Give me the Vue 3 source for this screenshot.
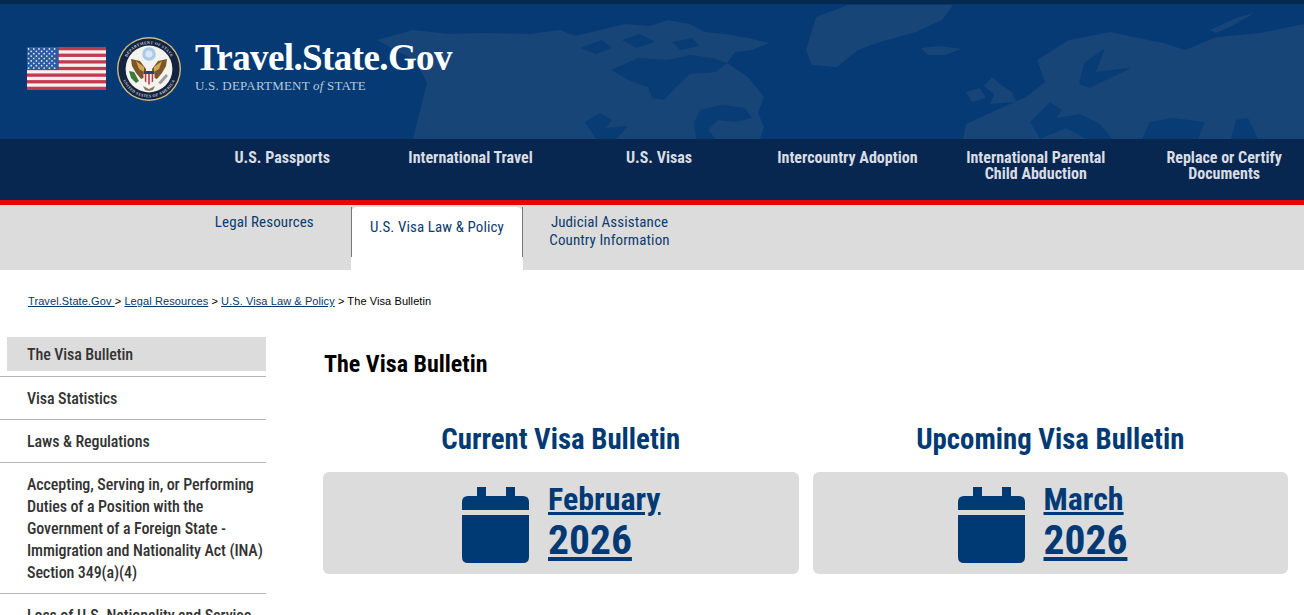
<script setup>
const navItems = [
  ['U.S. Passports'],
  ['International Travel'],
  ['U.S. Visas'],
  ['Intercountry Adoption'],
  ['International Parental', 'Child Abduction'],
  ['Replace or Certify', 'Documents'],
];

const sideItems = [
  { label: 'The Visa Bulletin', active: true },
  { label: 'Visa Statistics' },
  { label: 'Laws & Regulations' },
  {
    label:
      'Accepting, Serving in, or Performing Duties of a Position with the Government of a Foreign State - Immigration and Nationality Act (INA) Section 349(a)(4)',
  },
  { label: 'Loss of U.S. Nationality and Service in a Foreign Military' },
];

const bulletins = [
  { title: 'Current Visa Bulletin', month: 'February', year: '2026' },
  { title: 'Upcoming Visa Bulletin', month: 'March', year: '2026' },
];

const stripes = [0, 1, 2, 3, 4, 5, 6];
const stars = [];
for (let row = 0; row < 9; row++) {
  const count = row % 2 ? 5 : 6;
  for (let i = 0; i < count; i++) {
    stars.push({ x: (row % 2 ? 4.2 : 1.6) + i * 5.2, y: 1.9 + row * 2.4 });
  }
}
</script>

<template>
  <div class="page">
    <header class="banner">
      <!-- world map behind the header, coords are page px -->
      <svg class="map" viewBox="0 4 1304 135" preserveAspectRatio="none" aria-hidden="true">
        <path
          class="land"
          d="M377 40 L413 30 L450 34 L480 33 L530 34 L560 30 L575 36 L600 30 L625 24 L650 26 L668 20 L690 24 L705 32 L725 34 L748 38 L769 43 L752 50 L735 52 L727 63 L748 77 L764 97 L758 113 L764 127 L760 139 L413 139 L427 83 L415 60 L395 50 Z"
        />
        <path class="sea" d="M611 70 L638 58 L668 60 L690 55 L712 58 L727 63 L716 72 L690 74 L675 88 L664 100 L652 98 L648 87 L628 80 Z" />
        <path class="sea" d="M585 122 L600 113 L612 120 L606 128 L628 126 L616 139 L596 139 L590 130 Z" />
        <path class="sea" d="M700 110 L722 105 L745 108 L752 118 L736 122 L718 120 L708 130 L716 139 L696 139 L694 122 Z" />
        <path class="sea" d="M580 48 L602 40 L612 48 L596 54 Z M622 40 L640 34 L655 42 L636 48 Z M672 42 L692 38 L700 46 L680 50 Z" />
        <path class="land" d="M806 50 L816 17 L848 5 L953 5 L942 20 L916 32 L880 42 L858 50 L837 67 L812 65 Z" />
        <path class="land" d="M921 48 L940 46 L961 49 L945 55 L928 55 Z" />
        <path
          class="land"
          d="M1037 60 L1069 40 L1110 32 L1163 43 L1185 50 L1216 37 L1260 33 L1304 24 L1304 139 L963 139 L966 124 L990 113 L1026 97 L1045 82 Z"
        />
        <path class="sea" d="M1105 48 L1084 63 L1079 84 L1090 88 L1102 82 L1131 68 L1112 70 L1096 72 Z" />
        <path class="sea" d="M1050 102 L1062 110 L1056 118 L1080 114 L1100 124 L1112 139 L1086 139 L1066 128 L1040 139 L1030 122 Z" />
        <path class="sea" d="M1142 139 L1150 122 L1172 118 L1205 122 L1198 139 Z" />
        <path class="sea" d="M1231 139 L1236 120 L1248 118 L1258 139 Z" />
        <path class="land" d="M984 86 L992 77 L1000 84 L1012 92 L1016 102 L990 104 L994 94 Z" />
        <path class="land" d="M966 92 L980 88 L986 98 L972 102 Z" />
        <path class="land" d="M1210 30 L1236 18 L1254 13 L1232 26 L1216 33 Z" />
      </svg>

      <svg class="flag" viewBox="0 0 79 43" aria-label="United States flag" role="img">
        <rect width="79" height="43" fill="#f4f1f1" />
        <rect v-for="s in stripes" :key="s" width="79" height="3.3" :y="s * 6.62" fill="#c23a4e" />
        <rect width="31.7" height="23" fill="#2b5b9c" />
        <circle v-for="(star, i) in stars" :key="i" :cx="star.x" :cy="star.y" r="0.85" fill="#e8eef7" />
      </svg>

      <svg class="seal" viewBox="-32 -32 64 64" aria-label="Department of State seal" role="img">
        <defs>
          <path id="sealTop" d="M-25 0 A25 25 0 0 1 25 0" />
          <path id="sealBottom" d="M-28.4 0 A28.4 28.4 0 0 0 28.4 0" />
        </defs>
        <circle r="32" fill="#cdbb84" />
        <circle r="30.6" fill="#14233f" />
        <circle r="23.4" fill="#f3f3f0" />
        <text class="seal-text"><textPath href="#sealTop" startOffset="50%" text-anchor="middle">DEPARTMENT OF STATE</textPath></text>
        <text class="seal-text"><textPath href="#sealBottom" startOffset="50%" text-anchor="middle">UNITED STATES OF AMERICA</textPath></text>
        <circle cy="-15" r="6.8" fill="#a9cbe6" />
        <circle cy="-15" r="3.6" fill="#dbe8f3" />
        <path d="M-18 -10 L-9 -8 L-3 0 L-3 8 L-8 10 L-13 4 L-17 -3 Z" fill="#7d5526" />
        <path d="M18 -10 L9 -8 L3 0 L3 8 L8 10 L13 4 L17 -3 Z" fill="#7d5526" />
        <path d="M-13 -8 L-5 -2 L-5 3 L-10 0 Z" fill="#d2a857" />
        <path d="M13 -8 L5 -2 L5 3 L10 0 Z" fill="#d2a857" />
        <path d="M-5.5 2 H5.5 V10 Q5.5 14 0 16 Q-5.5 14 -5.5 10 Z" fill="#f5f2f0" />
        <path d="M-5.5 2 H5.5 V5 H-5.5 Z" fill="#23417c" />
        <path d="M-4.2 5 H-2.7 V13.6 L-4.2 12.6 Z M-0.8 5 H0.8 V15.6 H-0.8 Z M2.7 5 H4.2 V12.6 L2.7 13.6 Z" fill="#b93a48" />
        <path d="M-20 2 L-15 3 L-10 12 L-13 14 L-18 9 Z" fill="#3c7a3a" />
        <path d="M9 14 L17 5 L19 7 L12 15 Z" fill="#9b9c97" />
        <path d="M-6 17 L0 20 L6 17 L4 21 L0 22 L-4 21 Z" fill="#8a7a5c" />
      </svg>

      <div class="brand">
        <div class="brand-name">Travel.State.Gov</div>
        <div class="brand-sub">U.S. DEPARTMENT <i>of</i> STATE</div>
      </div>
    </header>

    <nav class="main-nav">
      <a v-for="(item, i) in navItems" :key="i" class="main-link">
        <span v-for="line in item" :key="line">{{ line }}</span>
      </a>
    </nav>

    <nav class="sub-nav">
      <a class="sub-link"><span>Legal Resources</span></a>
      <a class="sub-link current"><span>U.S. Visa Law &amp; Policy</span></a>
      <a class="sub-link">
        <span>Judicial Assistance</span>
        <span>Country Information</span>
      </a>
    </nav>

    <div class="crumbs">
      <a>Travel.State.Gov </a> &gt; <a>Legal Resources</a> &gt; <a>U.S. Visa Law &amp; Policy</a> &gt; The Visa Bulletin
    </div>

    <div class="content">
      <aside class="side">
        <a v-for="item in sideItems" :key="item.label" class="side-item" :class="{ active: item.active }">
          <span class="side-label">{{ item.label }}</span>
        </a>
      </aside>

      <main class="main">
        <h1>The Visa Bulletin</h1>
        <div class="bulletins">
          <section v-for="b in bulletins" :key="b.title" class="bulletin">
            <h2>{{ b.title }}</h2>
            <div class="card">
              <svg class="cal" viewBox="0 0 67 76" aria-hidden="true">
                <path d="M15 0 H24 V9 H44 V0 H53 V9 H61 Q67 9 67 15 V23 H0 V15 Q0 9 6 9 H15 Z" />
                <path d="M0 28 H67 V70 Q67 76 61 76 H6 Q0 76 0 70 Z" />
              </svg>
              <div class="date">
                <a class="month">{{ b.month }}</a>
                <a class="year">{{ b.year }}</a>
              </div>
            </div>
          </section>
        </div>
      </main>
    </div>
  </div>
</template>

<style>
html,
body {
  margin: 0;
  height: 615px;
  overflow: hidden;
  background: #fff;
}
</style>

<style scoped>
.page {
  width: 1304px;
  font-family: Roboto, "Liberation Sans", sans-serif;
  font-stretch: 75%;
}

.banner {
  position: relative;
  height: 135px;
  border-top: 4px solid #05294f;
  background: #053a75;
  display: flex;
  align-items: flex-start;
  overflow: hidden;
}
.map {
  position: absolute;
  inset: 0;
  width: 100%;
  height: 100%;
}
.land {
  fill: #174578;
}
.sea {
  fill: #083c75;
}
.flag {
  position: relative;
  width: 79px;
  height: 43px;
  margin: 43px 0 0 27px;
}
.seal {
  position: relative;
  width: 64px;
  height: 64px;
  margin: 33px 0 0 11px;
}
.seal-text {
  font: 700 4px "Liberation Serif", serif;
  fill: #c9cfd8;
  letter-spacing: 0.3px;
}
.brand {
  position: relative;
  margin: 34px 0 0 14px;
  color: #fff;
  font-family: "Liberation Serif", serif;
}
.brand-name {
  font-size: 37px;
  font-weight: 700;
  line-height: 40px;
  letter-spacing: -0.6px;
}
.brand-sub {
  font-size: 13px;
  line-height: 15px;
  margin: 0;
  color: #b9c8da;
  letter-spacing: 0.2px;
}

.main-nav {
  height: 61px;
  padding-left: 188px;
  display: flex;
  background: #072750;
  overflow: hidden;
}
.main-link {
  flex: 0 0 188.4px;
  padding-top: 11px;
  display: flex;
  flex-direction: column;
  align-items: center;
  color: #d9dde3;
  font-size: 16px;
  font-weight: 700;
  line-height: 16px;
}

.sub-nav {
  height: 65px;
  border-top: 5px solid #e00808;
  padding-left: 178px;
  display: flex;
  background: #dcdcdc;
}
.sub-link {
  flex: 0 0 172.6px;
  box-sizing: border-box;
  padding-top: 8px;
  display: flex;
  flex-direction: column;
  align-items: center;
  color: #0d3b6e;
  font-size: 15px;
  line-height: 18px;
  letter-spacing: 0.1px;
}
.sub-link.current {
  margin-top: 2px;
  padding-top: 11px;
  background: #fff;
  border-radius: 6px 6px 0 0;
  position: relative;
}
.sub-link.current::before,
.sub-link.current::after {
  content: "";
  position: absolute;
  top: 0;
  height: 50px;
  width: 1px;
  background: #777;
}
.sub-link.current::before {
  left: 0;
}
.sub-link.current::after {
  right: 0;
}

.crumbs {
  padding: 25px 0 0 28px;
  height: 42px;
  font-family: "Liberation Sans", Arial, sans-serif;
  font-stretch: normal;
  font-size: 11px;
  line-height: 13px;
  letter-spacing: 0.09px;
  color: #000;
}
.crumbs a {
  color: #003a70;
  text-decoration: underline;
}

.content {
  display: flex;
  align-items: flex-start;
}
.side {
  width: 266px;
  flex: none;
}
.side-item {
  display: block;
  padding: 11px 0 9px 27px;
  border-bottom: 1px solid #b5b5b5;
  color: #333;
  font-size: 16px;
  font-weight: 500;
  line-height: 22px;
  letter-spacing: -0.1px;
}
.side-item.active {
  padding: 0 0 5px 7px;
}
.side-item.active .side-label {
  display: block;
  background: #dcdcdc;
  padding: 7px 0 5px 20px;
}

.main {
  flex: 1;
  min-width: 0;
  padding: 0 16px 0 57px;
}
h1 {
  margin: 12px 0 0 1px;
  color: #000;
  font-size: 24px;
  font-weight: 700;
  line-height: 30px;
}
.bulletins {
  margin-top: 43px;
  display: flex;
  gap: 14px;
}
.bulletin {
  flex: 1;
  min-width: 0;
}
h2 {
  margin: 0 0 16px;
  text-align: center;
  color: #003a74;
  font-size: 28.8px;
  font-weight: 700;
  line-height: 34px;
}
.card {
  height: 102px;
  padding-left: 139px;
  border-radius: 6px;
  background: #dcdcdc;
  display: flex;
  align-items: center;
  gap: 19px;
}
.bulletin:last-child .card {
  padding-left: 145px;
}
.cal {
  width: 67px;
  height: 76px;
  margin-top: 4px;
  fill: #003a74;
}
.date {
  display: flex;
  flex-direction: column;
  align-items: flex-start;
  margin-top: -4px;
  color: #003a74;
  font-weight: 700;
}
.month,
.year {
  text-decoration: underline;
  color: inherit;
}
.month {
  font-size: 32px;
  line-height: 38px;
}
.year {
  font-size: 41.5px;
  line-height: 44px;
}
</style>
